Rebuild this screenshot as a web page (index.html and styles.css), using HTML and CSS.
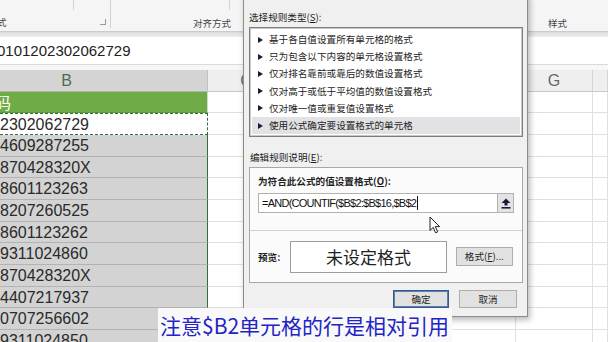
FILE: index.html
```html
<!DOCTYPE html>
<html lang="zh">
<head>
<meta charset="utf-8">
<link rel="stylesheet" href="styles.css">
</head>
<body>
<div class="ribbon">
  <div class="rb-group g1">
    <div class="rb-top"><span class="rb-tick t1"></span></div>
    <div class="rb-bottom"><span class="rb-label cut">式</span><span class="launcher"></span></div>
  </div>
  <div class="rb-group g2">
    <div class="rb-top"><span class="rb-tick t2"></span></div>
    <div class="rb-bottom"><span class="rb-label l2">对齐方式</span></div>
  </div>
  <div class="rb-group g3">
    <div class="rb-top"></div>
    <div class="rb-bottom"><span class="rb-label">样式</span></div>
  </div>
</div>
<div class="rb-shade"></div>
<div class="fbar">0101202302062729</div>
<div class="gap"></div>
<div class="sheet">
  <div class="row hdr"><i class="sel">B</i><i>C</i><i></i><i></i><i></i><i>G</i><i></i></div>
  <div class="row"><i class="green">码</i><i></i><i></i><i></i><i></i><i></i><i></i></div>
  <div class="row"><i class="active">2302062729</i><i></i><i></i><i></i><i></i><i></i><i></i></div>
  <div class="row"><i class="gray">4609287255</i><i></i><i></i><i></i><i></i><i></i><i></i></div>
  <div class="row"><i class="gray">870428320X</i><i></i><i></i><i></i><i></i><i></i><i></i></div>
  <div class="row"><i class="gray">8601123263</i><i></i><i></i><i></i><i></i><i></i><i></i></div>
  <div class="row"><i class="gray">8207260525</i><i></i><i></i><i></i><i></i><i></i><i></i></div>
  <div class="row"><i class="gray">8601123262</i><i></i><i></i><i></i><i></i><i></i><i></i></div>
  <div class="row"><i class="gray">9311024860</i><i></i><i></i><i></i><i></i><i></i><i></i></div>
  <div class="row"><i class="gray">870428320X</i><i></i><i></i><i></i><i></i><i></i><i></i></div>
  <div class="row"><i class="gray">4407217937</i><i></i><i></i><i></i><i></i><i></i><i></i></div>
  <div class="row"><i class="gray">0707256602</i><i></i><i></i><i></i><i></i><i></i><i></i></div>
  <div class="row"><i class="gray">9311024850</i><i></i><i></i><i></i><i></i><i></i><i></i></div>
</div>

<div class="dialog">
  <div class="dlabel first">选择规则类型(<u>S</u>):</div>
  <div class="list">
    <div class="item"><span class="tri"></span>基于各自值设置所有单元格的格式</div>
    <div class="item"><span class="tri"></span>只为包含以下内容的单元格设置格式</div>
    <div class="item"><span class="tri"></span>仅对排名靠前或靠后的数值设置格式</div>
    <div class="item"><span class="tri"></span>仅对高于或低于平均值的数值设置格式</div>
    <div class="item"><span class="tri"></span>仅对唯一值或重复值设置格式</div>
    <div class="item on"><span class="tri"></span>使用公式确定要设置格式的单元格</div>
  </div>
  <div class="dlabel second">编辑规则说明(<u>E</u>):</div>
  <div class="box">
    <div class="box-top">
      <div class="bold">为符合此公式的值设置格式(<u>O</u>):</div>
      <div class="input">
        <div class="formula">=AND(COUNTIF($B$2:$B$16,$B$2<span class="caret"></span></div>
        <div class="collapse">
          <svg width="10" height="11" viewBox="0 0 10 11"><path d="M5 0.5 L9.5 5 L6.5 5 L6.5 7.5 L3.5 7.5 L3.5 5 L0.5 5 Z" fill="#1b1b3a"/><rect x="0.5" y="9" width="9" height="1.6" fill="#1b1b3a"/></svg>
        </div>
      </div>
    </div>
    <div class="box-bottom">
      <div class="bold">预览:</div>
      <div class="preview">未设定格式</div>
      <div class="btn fmt">格式(<u>F</u>)...</div>
    </div>
  </div>
  <div class="actions">
    <div class="btn ok">确定</div>
    <div class="btn">取消</div>
  </div>
</div>

<svg class="pointer" width="12" height="18" viewBox="0 0 12 18"><path d="M1 1 L1 14.5 L4.2 11.4 L6.6 16.8 L8.7 15.9 L6.3 10.6 L10.6 10.6 Z" fill="#fff" stroke="#222" stroke-width="1" stroke-linejoin="round"/></svg>

<div class="caption">注意$B2单元格的行是相对引用</div>
</body>
</html>
```

FILE: styles.css
```css
* { box-sizing: border-box; margin: 0; padding: 0; }
html, body { width: 608px; height: 342px; overflow: hidden; background: #fff; }
body { position: relative; font-family: "Liberation Sans", "Noto Sans CJK SC", sans-serif; color: #222; }

/* ribbon */
.ribbon { height: 32px; background: #f5f5f5; border-bottom: 1px solid #cbcbcb; display: flex; overflow: hidden; }
.rb-group { display: flex; flex-direction: column; justify-content: space-between; height: 31px; }
.rb-top { height: 10px; display: flex; }
.rb-tick { display: block; height: 10px; border-right: 1px solid #d2d2d2; }
.t1 { width: 74px; }
.t2 { width: 119px; }
.g1 { width: 111px; border-right: 1px solid #d2d2d2; height: 28px; }
.g2 { width: 437px; }
.g3 { flex: 1; }
.rb-bottom { display: flex; align-items: center; justify-content: space-between; height: 16px; }
.g1 .rb-bottom { height: 14px; margin-bottom: -1px; }
.rb-label { font-family: "Noto Sans CJK SC", sans-serif; font-size: 9.5px; line-height: 14px; color: #444; white-space: nowrap; }
.cut { margin-left: -3px; }
.l2 { margin-left: 82px; }
.launcher { width: 6px; height: 6px; border-right: 1px solid #9a9a9a; border-bottom: 1px solid #9a9a9a; margin-right: 4px; }
.rb-shade { height: 5px; background: linear-gradient(#dcdcdc, #eeeeee); }

/* formula bar */
.fbar { height: 28px; border-bottom: 1px solid #dadada; font-size: 15px; line-height: 28px; text-indent: -3px; color: #222; white-space: nowrap; }
.gap { height: 5px; background: #f7f7f7; }

/* sheet */
.row { display: grid; grid-template-columns: 208px repeat(5, 77px) 1fr; height: 21.7px; }
.row i { font-style: normal; display: block; border-right: 1px solid #e0e0e0; border-bottom: 1px solid #e0e0e0; font-size: 16px; line-height: 22px; white-space: nowrap; overflow: hidden; }
.row.hdr { height: 21.5px; }
.hdr i { background: #efefef; border-right: 1px solid #d4d4d4; border-bottom: 1px solid #c9c9c9; text-align: center; color: #666; font-size: 16px; line-height: 22px; }
.hdr i.sel { background: #d4d4d4; color: #4f6b55; border-bottom: 1px solid #a9b9a9; border-right: 1px solid #c2c2c2; padding-right: 74px; }
.row i.green { background: #6fab46; color: #fff; font-family: "Noto Sans CJK SC", sans-serif; font-size: 16px; line-height: 21px; text-indent: -5px; border-right: 1px solid #d6d6d6; border-bottom: 1px solid #5e9a3a; }
.row i.active { background: #fff; border: 1.5px dashed #2f6e3d; border-left: none; line-height: 21px; color: #2a2a2a; }
.row i.gray { background: #d3d3d3; border-bottom: 1px solid #b3b3b3; border-right: 1px solid #2f6e3d; color: #2a2a2a; }

/* dialog */
.dialog { position: absolute; left: 243px; top: -6px; width: 285px; height: 323px; background: #f0f0f0; border: 1px solid #8c8c8c; box-shadow: 2px 3px 6px rgba(0,0,0,0.28); padding: 0 4px 0 5px; display: flex; flex-direction: column; font-family: "Noto Sans CJK SC", sans-serif; font-size: 9.6px; color: #1e1e1e; }
.dlabel { line-height: 14px; height: 14px; white-space: nowrap; }
.dlabel.first { margin-top: 15px; }
.dlabel.second { margin-top: 13px; margin-left: 1px; }
.list { margin-top: 3px; height: 110px; background: #fff; border: 1px solid #7e7e7e; box-shadow: inset 0 0 0 1px #c8c8c8; padding: 3px 2px 0 2px; }
.item { height: 17.2px; line-height: 17.2px; display: flex; align-items: center; white-space: nowrap; padding-left: 6px; }
.item.on { background: #e2e2e4; }
.tri { width: 0; height: 0; border-left: 5px solid #1c1c30; border-top: 3.5px solid transparent; border-bottom: 3.5px solid transparent; margin-right: 6px; }
.box { margin-top: 3px; height: 116px; border: 1px solid #a8a8a8; background: #fbfbfb; display: flex; flex-direction: column; }
.box-top { padding: 6px 8px 0 8px; height: 63px; border-bottom: 1px solid #d2d2d2; }
.bold { font-weight: bold; line-height: 14px; white-space: nowrap; }
.input { margin-top: 5px; height: 20px; background: #fff; border: 1px solid #b2b2b2; display: flex; }
.formula { flex: 1; font-family: "Liberation Sans", sans-serif; font-size: 11px; letter-spacing: -0.75px; line-height: 18px; padding-left: 3px; color: #111; white-space: nowrap; display: flex; align-items: center; }
.caret { display: inline-block; width: 1px; height: 14px; background: #111; margin-left: 1px; }
.collapse { width: 16px; background: #e3e3e3; border-left: 1px solid #b2b2b2; display: flex; align-items: center; justify-content: center; }
.box-bottom { flex: 1; display: flex; align-items: center; padding: 0 9px 0 8px; }
.preview { margin-left: 10px; width: 158px; height: 32px; border: 1px solid #9c9c9c; background: #fff; font-size: 17px; line-height: 30px; text-align: center; color: #222; }
.btn { height: 19px; border: 1px solid #adadad; background: #e1e1e1; text-align: center; line-height: 17px; white-space: nowrap; }
.fmt { margin-left: 9px; width: 58px; }
.actions { margin-top: 7px; display: flex; justify-content: flex-end; gap: 10px; padding-right: 6px; }
.actions .btn { width: 58px; height: 18px; line-height: 16px; }
.actions .btn.ok { width: 56px; border: 1px solid #34598a; box-shadow: inset 0 0 0 1px #5a7fb0; }

.pointer { position: absolute; left: 429px; top: 216px; }

.caption { position: absolute; left: 158px; top: 308px; width: 294px; height: 34px; background: #f9f9f9; color: #2424c6; font-family: "Noto Sans CJK SC", sans-serif; font-size: 21px; line-height: 34px; padding-left: 2px; white-space: nowrap; }
```
